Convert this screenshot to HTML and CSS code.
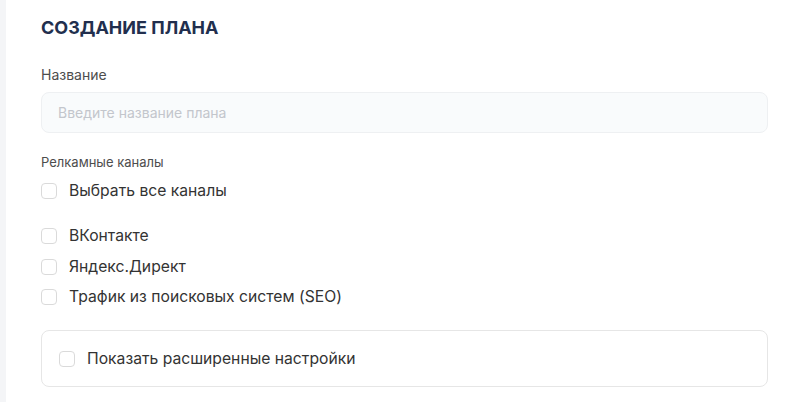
FILE: index.html
```html
<!DOCTYPE html>
<html lang="ru">
<head>
<meta charset="utf-8">
<link rel="stylesheet" href="styles.css">
</head>
<body>
<div class="page">
  <div class="card">
    <h1 class="title">СОЗДАНИЕ ПЛАНА</h1>
    <div class="field">
      <div class="label">Название</div>
      <input class="input" type="text" placeholder="Введите название плана">
    </div>
    <div class="channels">
      <div class="label label-sm">Релкамные каналы</div>
      <label class="check check-all"><span class="box"></span><span>Выбрать все каналы</span></label>
      <div class="check-list">
        <label class="check"><span class="box"></span><span>ВКонтакте</span></label>
        <label class="check"><span class="box"></span><span>Яндекс.Директ</span></label>
        <label class="check"><span class="box"></span><span>Трафик из поисковых систем (SEO)</span></label>
      </div>
    </div>
    <div class="advanced">
      <label class="check"><span class="box"></span><span>Показать расширенные настройки</span></label>
    </div>
  </div>
</div>
</body>
</html>
```
FILE: styles.css
```css
* { box-sizing: border-box; }
html, body { margin: 0; padding: 0; }
body {
  background: #f4f5f7;
  font-family: "Inter", "Liberation Sans", sans-serif;
  width: 802px;
  height: 402px;
  overflow: hidden;
}
.page {
  padding-left: 6px;
  height: 402px;
}
.card {
  background: #ffffff;
  height: 402px;
  padding: 15px 34px 0 35px;
}
.title {
  margin: 0;
  font-size: 18px;
  line-height: 26px;
  font-weight: 700;
  color: #222f4e;
}
.field { margin-top: 25px; }
.label {
  font-size: 14px;
  line-height: 18px;
  color: #4d4d4d;
}
.input {
  display: block;
  margin-top: 8px;
  width: 100%;
  height: 41px;
  border: 1px solid #eef0f2;
  border-radius: 8px;
  background: #f9fbfc;
  padding: 0 16px;
  font-family: inherit;
  font-size: 14px;
  outline: none;
}
.input::placeholder { color: #c3c6cc; }
.channels { margin-top: 20px; }
.label-sm { font-size: 13px; }
.check {
  display: flex;
  align-items: center;
  gap: 12px;
  font-size: 15.7px;
  line-height: 20px;
  color: #333333;
}
.box {
  flex: none;
  width: 16px;
  height: 16px;
  border: 1px solid #dadada;
  border-radius: 4px;
  background: #fff;
}
.check-all { margin-top: 10px; }
.check-list {
  margin-top: 25px;
  display: flex;
  flex-direction: column;
  gap: 10.5px;
}
.advanced {
  margin-top: 23px;
  height: 57px;
  border: 1px solid #e6e6e6;
  border-radius: 8px;
  padding: 0 17px;
  display: flex;
  align-items: center;
}
```
